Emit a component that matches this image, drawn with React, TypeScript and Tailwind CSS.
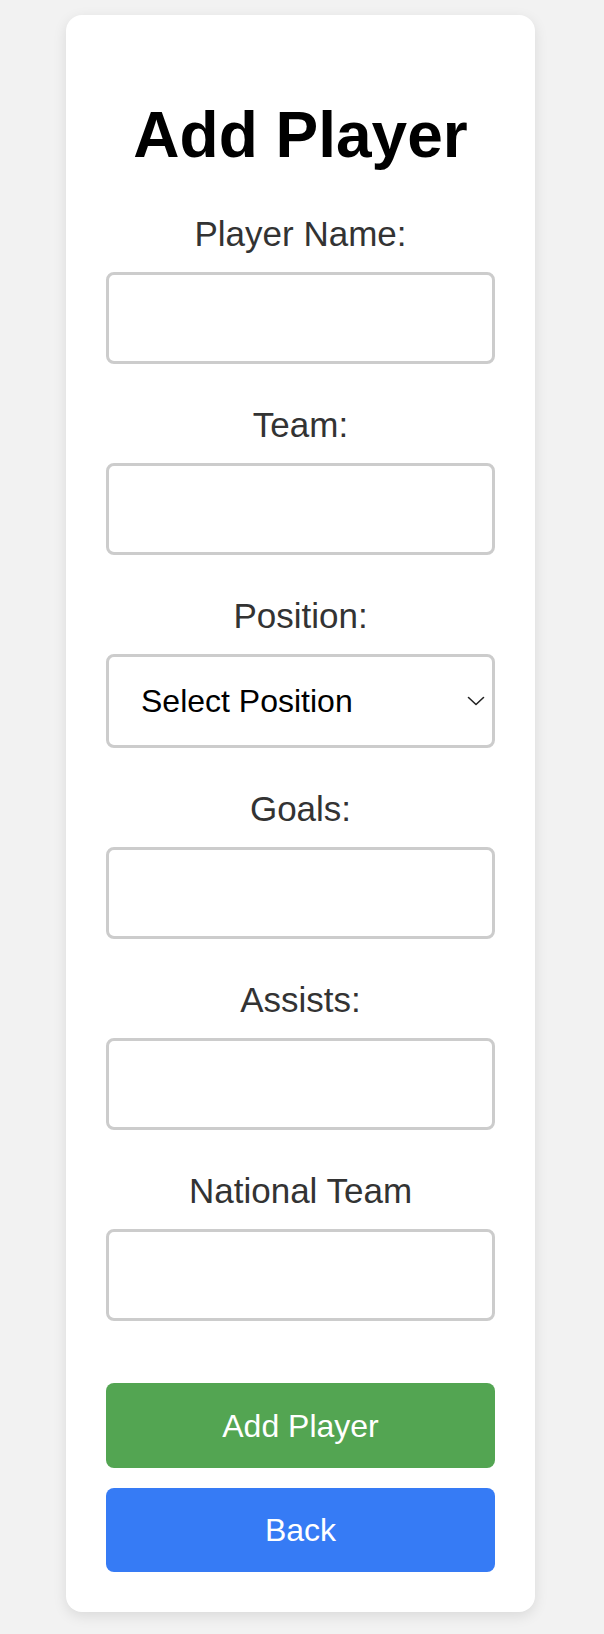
import React from "react";

const fields = [
  { label: "Player Name:", type: "text" },
  { label: "Team:", type: "text" },
  { label: "Position:", type: "select" },
  { label: "Goals:", type: "number" },
  { label: "Assists:", type: "number" },
  { label: "National Team", type: "text" },
];

function Chevron() {
  return (
    <svg
      className="pointer-events-none absolute right-[10px] top-1/2 -translate-y-1/2"
      width="18"
      height="10"
      viewBox="0 0 18 10"
      fill="none"
    >
      <path d="M1.5 1.5 L9 8.5 L16.5 1.5" stroke="#222" strokeWidth="1.6" strokeLinecap="round" strokeLinejoin="round" />
    </svg>
  );
}

export default function App() {
  return (
    <div
      className="min-h-[1634px] bg-[#f2f2f2] pt-[15px] pb-[22px]"
      style={{ fontFamily: '"Liberation Sans", Arial, sans-serif' }}
    >
      <div className="ml-[66px] w-[469px] rounded-[16px] bg-white px-[40px] pt-[40px] pb-[40px] shadow-[0_4px_14px_rgba(0,0,0,0.1)]">
        <h1 className="mt-[43px] mb-[42px] text-center text-[64px] font-bold leading-[74px] text-black">
          Add Player
        </h1>

        <form onSubmit={(e) => e.preventDefault()}>
          {fields.map((f, i) => (
            <div key={i} className="mb-[41px]">
              <label className="mb-[18px] block text-center text-[35px] leading-[40px] text-[#333]">
                {f.label}
              </label>
              {f.type === "select" ? (
                <div className="relative">
                  <select
                    defaultValue=""
                    className="block h-[94px] w-full appearance-none rounded-[8px] border-[3px] border-[#ccc] bg-white pl-[32px] text-[32px] text-black outline-none"
                  >
                    <option value="">Select Position</option>
                    <option>Goalkeeper</option>
                    <option>Defender</option>
                    <option>Midfielder</option>
                    <option>Forward</option>
                  </select>
                  <Chevron />
                </div>
              ) : (
                <input
                  type={f.type}
                  className="block h-[92px] w-full rounded-[8px] border-[3px] border-[#ccc] bg-white px-[16px] text-[32px] outline-none"
                />
              )}
            </div>
          ))}

          <button
            type="submit"
            className="mt-[62px] block h-[85px] w-full rounded-[8px] bg-[#53a552] text-[32px] text-white"
          >
            Add Player
          </button>
          <button
            type="button"
            className="mt-[20px] block h-[84px] w-full rounded-[8px] bg-[#367bf5] text-[32px] text-white"
          >
            Back
          </button>
        </form>
      </div>
    </div>
  );
}
